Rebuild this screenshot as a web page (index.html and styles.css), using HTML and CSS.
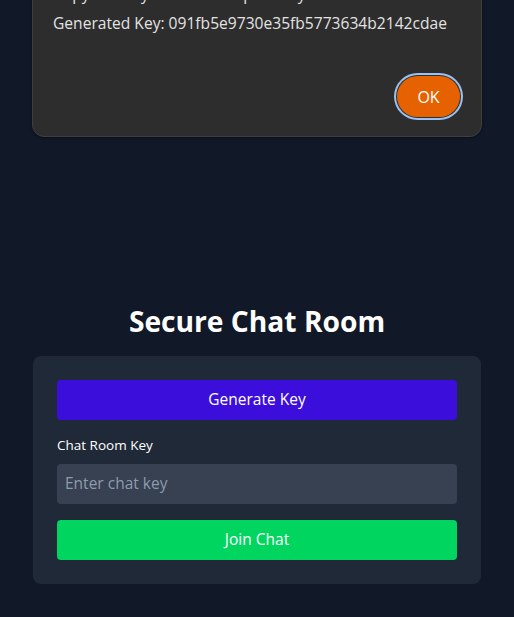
FILE: index.html
```html
<!DOCTYPE html>
<html lang="en">
<head>
<meta charset="utf-8">
<title>Secure Chat Room</title>
<link rel="stylesheet" href="styles.css">
</head>
<body>
<main class="page">
  <h1 class="title">Secure Chat Room</h1>
  <section class="card">
    <button class="btn btn-generate" type="button">Generate Key</button>
    <label class="label" for="key">Chat Room Key</label>
    <input class="input" id="key" type="text" placeholder="Enter chat key">
    <button class="btn btn-join" type="button">Join Chat</button>
  </section>
</main>
<div class="dialog" role="alertdialog">
  <p class="dialog-line dialog-head">Copy this key and share it privately:</p>
  <p class="dialog-line">Generated Key: 091fb5e9730e35fb5773634b2142cdae</p>
  <div class="dialog-actions">
    <button class="ok" type="button">OK</button>
  </div>
</div>
</body>
</html>
```
FILE: styles.css
```css
* { box-sizing: border-box; }
html, body { margin: 0; padding: 0; }
body {
  background: #111827;
  min-height: 617px;
  font-family: "Open Sans", "Noto Sans", sans-serif;
  color: #fff;
  position: relative;
  overflow: hidden;
}
.page {
  width: 448px;
  margin: 0 auto;
  padding-top: 303px;
  display: flex;
  flex-direction: column;
}
.title {
  margin: 0 0 17px;
  font-size: 28.2px;
  line-height: 36px;
  font-weight: 700;
  text-align: center;
}
.card {
  background: #1f2937;
  border-radius: 8px;
  padding: 24px;
  display: flex;
  flex-direction: column;
}
.btn {
  height: 40px;
  border: 0;
  border-radius: 4px;
  color: #fff;
  font-family: inherit;
  font-size: 15.5px;
  line-height: 36px;
  padding: 0 0 2px;
}
.btn-generate { background: #3c0edc; }
.btn-join { background: #00d65f; margin-top: 16px; }
.label {
  margin: 15px 0 9px;
  font-size: 13.5px;
  line-height: 20px;
  font-weight: 500;
}
.input {
  height: 40px;
  border: 0;
  border-radius: 4px;
  background: #374151;
  padding: 0 8px 2px;
  font-family: inherit;
  font-size: 15.5px;
  color: #fff;
}
.input::placeholder { color: #8e9bad; }
.dialog {
  position: absolute;
  left: 32px;
  top: -31px;
  width: 450px;
  height: 168px;
  background: #2d2d2d;
  border: 1px solid #3e3e3e;
  border-radius: 12px;
  padding: 14px 20px 0 20px;
  display: flex;
  flex-direction: column;
  box-shadow: 0 1px 3px rgba(0,0,0,.4);
}
.dialog-line {
  margin: 0;
  font-size: 15.6px;
  line-height: 20px;
  color: #e3e3e3;
  white-space: nowrap;
}
.dialog-head { margin-bottom: 9px; }
.dialog-actions {
  display: flex;
  justify-content: flex-end;
  margin-top: 43px;
}
.ok {
  width: 63px;
  height: 41px;
  margin-right: 1px;
  border: 0;
  border-radius: 999px;
  background: #e66100;
  color: #fff;
  font-family: inherit;
  font-size: 16px;
  box-shadow: 0 0 0 1px #303030, 0 0 0 3px #99c1f1;
}
```
